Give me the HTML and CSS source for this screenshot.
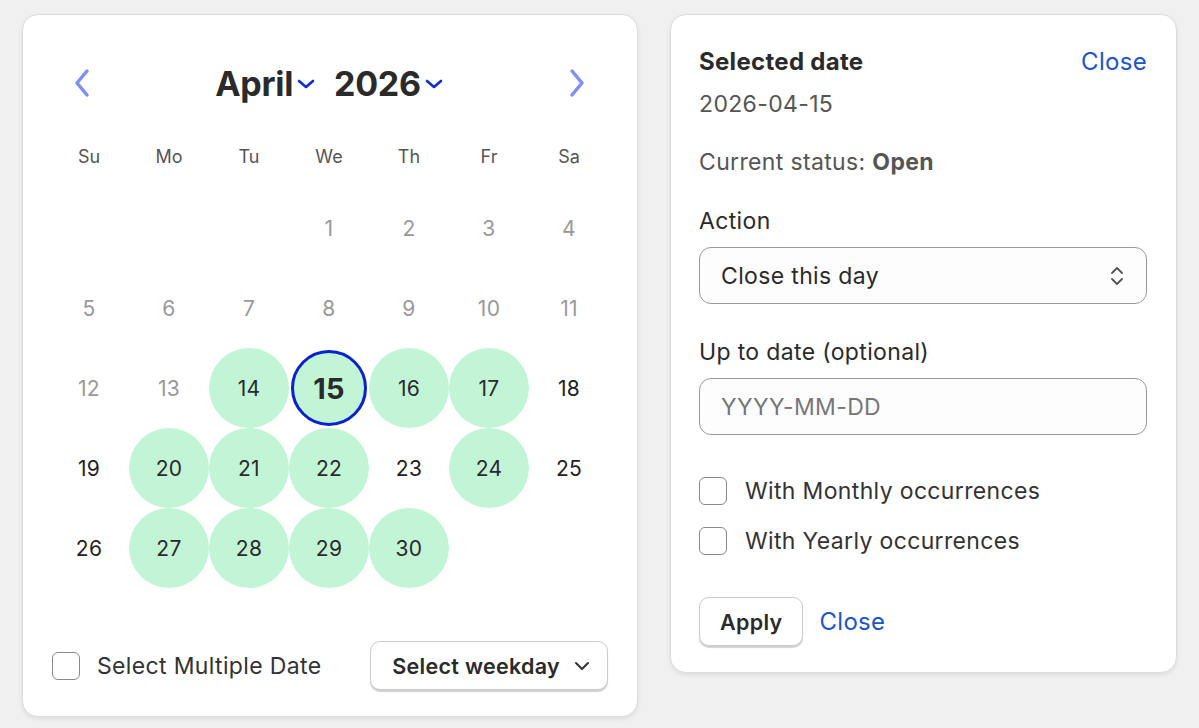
FILE: index.html
```html
<!DOCTYPE html>
<html lang="en">
<head>
    <meta charset="UTF-8">
    <meta name="viewport" content="width=device-width, initial-scale=1.0">
    <title>Calendar</title>
    <link rel="stylesheet" href="styles.css">
</head>
<body>
    <div class="page">
        <div class="calendar-card">
            <div class="cal-header">
                <button class="nav-btn">
                    <svg width="20" height="30" viewBox="0 0 20 30"><path d="M15 3 L5 15 L15 27" fill="none" stroke="#7f8ff2" stroke-width="3.5" stroke-linecap="round" stroke-linejoin="round"/></svg>
                </button>
                <div class="month-year">
                    <span class="pick">April
                        <svg width="20" height="12" viewBox="0 0 20 12"><path d="M3 3 L10 9 L17 3" fill="none" stroke="#0b2ed0" stroke-width="2.6" stroke-linecap="round" stroke-linejoin="round"/></svg>
                    </span>
                    <span class="pick">2026
                        <svg width="20" height="12" viewBox="0 0 20 12"><path d="M3 3 L10 9 L17 3" fill="none" stroke="#0b2ed0" stroke-width="2.6" stroke-linecap="round" stroke-linejoin="round"/></svg>
                    </span>
                </div>
                <button class="nav-btn">
                    <svg width="20" height="30" viewBox="0 0 20 30"><path d="M5 3 L15 15 L5 27" fill="none" stroke="#7f8ff2" stroke-width="3.5" stroke-linecap="round" stroke-linejoin="round"/></svg>
                </button>
            </div>

            <div class="weekdays">
                <span>Su</span><span>Mo</span><span>Tu</span><span>We</span><span>Th</span><span>Fr</span><span>Sa</span>
            </div>

            <div class="days" id="days"></div>

            <div class="cal-footer">
                <label class="check multi">
                    <span class="box"></span>
                    Select Multiple Date
                </label>
                <button class="weekday-btn">Select weekday
                    <svg width="16" height="10" viewBox="0 0 16 10"><path d="M2 2 L8 8 L14 2" fill="none" stroke="#333" stroke-width="2" stroke-linecap="round" stroke-linejoin="round"/></svg>
                </button>
            </div>
        </div>

        <div class="detail-card">
            <div class="detail-head">
                <h2>Selected date</h2>
                <a class="link">Close</a>
            </div>
            <div class="date-value">2026-04-15</div>
            <div class="status">Current status: <b>Open</b></div>

            <div class="field-label">Action</div>
            <div class="select">
                <span>Close this day</span>
                <svg width="14" height="22" viewBox="0 0 14 22"><path d="M2 8 L7 3 L12 8 M2 14 L7 19 L12 14" fill="none" stroke="#555" stroke-width="1.8" stroke-linecap="round" stroke-linejoin="round"/></svg>
            </div>

            <div class="field-label up">Up to date (optional)</div>
            <div class="input">YYYY-MM-DD</div>

            <label class="check opt first"><span class="box"></span>With Monthly occurrences</label>
            <label class="check opt"><span class="box"></span>With Yearly occurrences</label>

            <div class="actions">
                <button class="apply">Apply</button>
                <a class="link">Close</a>
            </div>
        </div>
    </div>

    <script>
        const days = document.getElementById('days');
        const highlighted = [14, 15, 16, 17, 20, 21, 22, 24, 27, 28, 29, 30];
        const startOffset = 3; // April 1st 2026 is a Wednesday

        for (let i = 0; i < startOffset; i++) {
            days.appendChild(document.createElement('div'));
        }
        for (let d = 1; d <= 30; d++) {
            const cell = document.createElement('div');
            cell.className = 'day';
            if (d < 14) cell.classList.add('past');
            if (highlighted.includes(d)) cell.classList.add('open');
            if (d === 15) cell.classList.add('selected');
            cell.textContent = d;
            days.appendChild(cell);
        }
    </script>
</body>
</html>
```

FILE: styles.css
```css
body {
    margin: 0;
    background: #f0f0f0;
    font-family: Inter, "Noto Sans", sans-serif;
    color: #222;
}

.page {
    display: flex;
    align-items: flex-start;
    gap: 32px;
    padding: 14px 22px;
}

.calendar-card,
.detail-card {
    background: #fff;
    border: 1px solid #dcdcdc;
    border-radius: 16px;
    box-shadow: 0 2px 4px rgba(0,0,0,0.08);
    box-sizing: border-box;
}

.calendar-card {
    width: 616px;
    height: 703px;
    padding: 40px 30px 0 26px;
}

.cal-header {
    display: flex;
    align-items: center;
    justify-content: space-between;
    height: 56px;
    padding: 0 20px 0 23px;
}

.nav-btn {
    border: none;
    background: none;
    padding: 0;
    display: flex;
}

.month-year {
    display: flex;
    gap: 18px;
    font-size: 34px;
    font-weight: 700;
    color: #2a2a2a;
    letter-spacing: -0.3px;
}

.pick {
    display: flex;
    align-items: center;
    gap: 3px;
}

.pick svg {
    margin-top: 2px;
}

.weekdays {
    display: grid;
    grid-template-columns: repeat(7, 80px);
    margin-top: 25px;
    height: 40px;
    align-items: center;
    font-size: 18px;
    color: #555;
}

.weekdays span {
    text-align: center;
}

.days {
    display: grid;
    grid-template-columns: repeat(7, 80px);
    grid-auto-rows: 80px;
    margin-top: 12px;
}

.day {
    display: flex;
    align-items: center;
    justify-content: center;
    font-size: 21px;
    letter-spacing: 0.3px;
    color: #222;
    border-radius: 50%;
    box-sizing: border-box;
}

.day.past {
    color: #999;
}

.day.open {
    background: #c2f5d6;
    color: #2a2a2a;
}

.day.selected {
    border: 3px solid #0a22d0;
    font-size: 29px;
    font-weight: 700;
    margin: 2px;
}

.cal-footer {
    display: flex;
    align-items: center;
    justify-content: space-between;
    margin-top: 53px;
    margin-right: -1px;
}

.check {
    display: flex;
    align-items: center;
    gap: 17px;
    font-size: 23px;
    letter-spacing: 0.35px;
    color: #333;
}

.check.multi {
    margin-left: 3px;
}

.box {
    width: 28px;
    height: 28px;
    border: 1.5px solid #888;
    border-radius: 6px;
    box-sizing: border-box;
    background: #fff;
}

.weekday-btn {
    display: flex;
    align-items: center;
    gap: 14px;
    height: 49px;
    padding: 0 17px 0 21px;
    background: #fff;
    border: 1px solid #ccc;
    border-radius: 10px;
    box-shadow: 0 2px 1px rgba(0,0,0,0.18);
    font-family: inherit;
    font-size: 21.5px;
    letter-spacing: 0.3px;
    font-weight: 600;
    color: #2a2a2a;
}

.detail-card {
    width: 507px;
    height: 659px;
    padding: 32px 29px 28px 28px;
}

.detail-head {
    display: flex;
    justify-content: space-between;
    align-items: center;
    height: 28px;
}

h2 {
    margin: 0;
    font-size: 24px;
    letter-spacing: 0.3px;
    font-weight: 700;
    color: #2a2a2a;
}

.link {
    color: #2154c9;
    font-size: 24px;
    letter-spacing: 0.3px;
    cursor: pointer;
}

.date-value,
.status,
.field-label {
    line-height: 28px;
    font-size: 23px;
    letter-spacing: 0.35px;
}

.date-value {
    margin-top: 15px;
    color: #555;
}

.status {
    margin-top: 30px;
    color: #555;
}

.field-label {
    margin-top: 31px;
    color: #2a2a2a;
}

.field-label.up {
    margin-top: 34px;
}

.select,
.input {
    display: flex;
    align-items: center;
    justify-content: space-between;
    margin-top: 12px;
    height: 57px;
    padding: 0 22px 0 21px;
    border: 1px solid #999;
    border-radius: 12px;
    box-sizing: border-box;
    background: #fdfdfd;
    font-size: 23px;
    letter-spacing: 0.35px;
    color: #2a2a2a;
}

.input {
    color: #777;
}

.opt {
    height: 28px;
    margin-top: 22px;
    gap: 18px;
}

.opt.first {
    margin-top: 42px;
}

.actions {
    display: flex;
    align-items: center;
    gap: 16px;
    margin-top: 42px;
}

.apply {
    height: 49px;
    padding: 0 20px;
    background: #fff;
    border: 1px solid #ccc;
    border-radius: 10px;
    box-shadow: 0 2px 1px rgba(0,0,0,0.18);
    font-family: inherit;
    font-size: 21.5px;
    letter-spacing: 0.3px;
    font-weight: 600;
    color: #2a2a2a;
}
```
